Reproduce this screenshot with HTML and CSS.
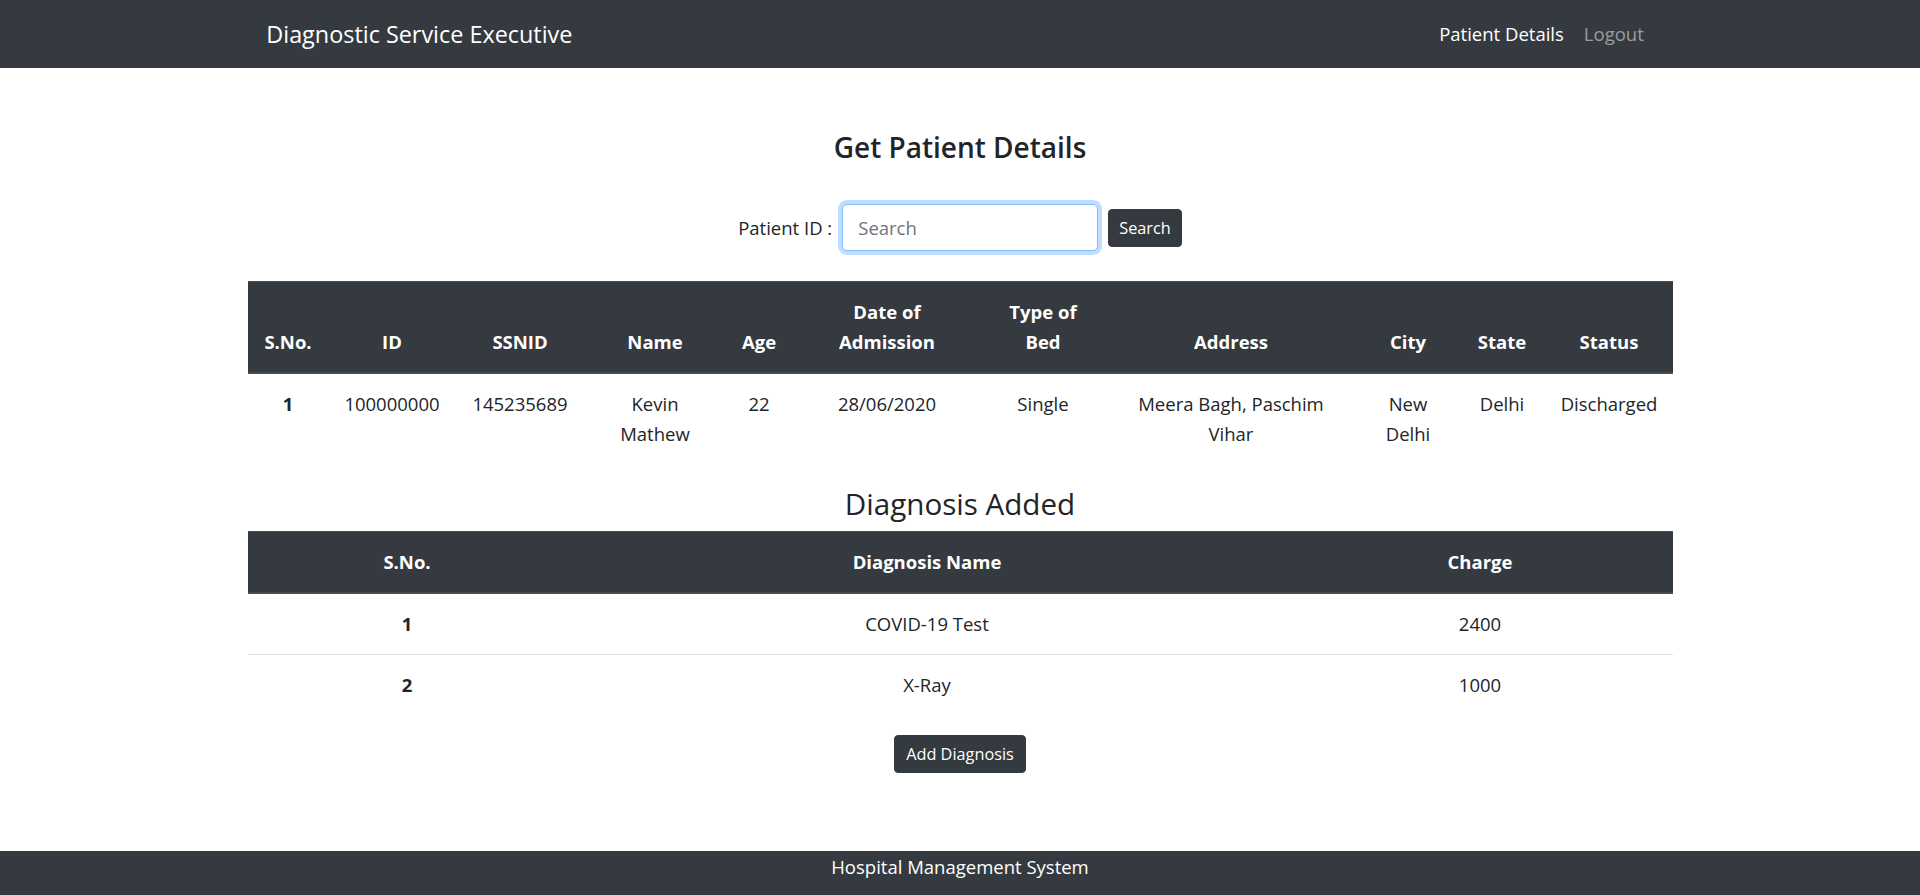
FILE: index.html
```html
<!DOCTYPE html>
<html lang="en">
<head>
<meta charset="utf-8">
<title>Diagnostic Service Executive</title>
<link rel="stylesheet" href="styles.css">
</head>
<body>
<nav class="navbar">
  <div class="nav-inner">
    <a class="brand">Diagnostic Service Executive</a>
    <ul class="nav-links">
      <li><a class="nav-link active">Patient Details</a></li>
      <li><a class="nav-link">Logout</a></li>
    </ul>
  </div>
</nav>
<main class="main">
  <h3 class="title title-strong">Get Patient Details</h3>
  <form class="search-form">
    <label class="search-label">Patient ID :</label>
    <input class="search-input" type="text" placeholder="Search">
    <button class="btn" type="button">Search</button>
  </form>
  <table class="table patient-table">
    <colgroup>
      <col class="c-sno"><col class="c-id"><col class="c-ssnid"><col class="c-name"><col class="c-age"><col class="c-doa"><col class="c-bed"><col class="c-addr"><col class="c-city"><col class="c-state"><col class="c-status">
    </colgroup>
    <thead>
      <tr>
        <th>S.No.</th><th>ID</th><th>SSNID</th><th>Name</th><th>Age</th><th>Date of Admission</th><th>Type of Bed</th><th>Address</th><th>City</th><th>State</th><th>Status</th>
      </tr>
    </thead>
    <tbody>
      <tr>
        <th class="row-head">1</th><td>100000000</td><td>145235689</td><td>Kevin Mathew</td><td>22</td><td>28/06/2020</td><td>Single</td><td>Meera Bagh, Paschim Vihar</td><td>New Delhi</td><td>Delhi</td><td>Discharged</td>
      </tr>
    </tbody>
  </table>
  <h4 class="title title-light">Diagnosis Added</h4>
  <table class="table diag-table">
    <colgroup>
      <col class="d-sno"><col class="d-name"><col class="d-charge">
    </colgroup>
    <thead>
      <tr><th>S.No.</th><th>Diagnosis Name</th><th>Charge</th></tr>
    </thead>
    <tbody>
      <tr><th class="row-head">1</th><td>COVID-19 Test</td><td>2400</td></tr>
      <tr><th class="row-head">2</th><td>X-Ray</td><td>1000</td></tr>
    </tbody>
  </table>
  <div class="actions">
    <button class="btn" type="button">Add Diagnosis</button>
  </div>
</main>
<footer class="footer">Hospital Management System</footer>
</body>
</html>
```
FILE: styles.css
```css
html, body {
  margin: 0;
  padding: 0;
}
body {
  font-family: "Open Sans", "Noto Sans", sans-serif;
  font-size: 18.5px;
  line-height: 30px;
  color: #212529;
  background: #fff;
  min-height: 100vh;
  display: flex;
  flex-direction: column;
}
.navbar {
  background: #343a40;
  height: 68px;
  display: flex;
  align-items: center;
}
.nav-inner {
  width: 1425px;
  margin: 0 auto;
  padding: 0 18.75px;
  box-sizing: border-box;
  display: flex;
  justify-content: space-between;
  align-items: center;
}
.brand {
  color: #fff;
  font-size: 23.4px;
  line-height: 34px;
}
.nav-links {
  list-style: none;
  margin: 0;
  padding: 0;
  display: flex;
}
.nav-link {
  display: block;
  padding: 0 10px;
  color: rgba(255, 255, 255, 0.5);
}
.nav-link.active {
  color: #fff;
}
.main {
  width: 1425px;
  margin: 0 auto;
  padding-top: 58px;
  display: flex;
  flex-direction: column;
  align-items: center;
}
.title {
  margin: 0;
  font-size: 28px;
  line-height: 42px;
  text-align: center;
}
.title-strong {
  font-weight: 600;
  margin-bottom: 36px;
}
.title-light {
  font-size: 29.6px;
  font-weight: 500;
  margin-top: -1px;
  margin-bottom: 6px;
}
.search-form {
  display: flex;
  align-items: center;
  justify-content: center;
  margin: 0 0 30px;
}
.search-label {
  margin-right: 10px;
}
.search-input {
  width: 256px;
  height: 47px;
  box-sizing: border-box;
  padding: 0 15px;
  border: 1px solid #80bdff;
  border-radius: 5px;
  box-shadow: 0 0 0 4px rgba(0, 123, 255, 0.25);
  font-family: inherit;
  font-size: 18.5px;
  color: #495057;
  outline: none;
}
.search-input::placeholder {
  color: #6c757d;
}
.btn {
  margin-left: 10px;
  height: 38px;
  padding: 0 10px;
  background: #343a40;
  border: 1px solid #343a40;
  border-radius: 4px;
  color: #fff;
  font-family: inherit;
  font-size: 16.3px;
  line-height: 36px;
  cursor: pointer;
}
.table {
  width: 1425px;
  border-collapse: collapse;
  table-layout: fixed;
  margin-bottom: 20px;
}
.table th,
.table td {
  padding: 15px;
  text-align: center;
  vertical-align: top;
  border-top: 1px solid #dee2e6;
}
.table thead th {
  background: #343a40;
  color: #fff;
  font-weight: 700;
  vertical-align: bottom;
  border-top: 1px solid #454d55;
  border-bottom: 2px solid #454d55;
}
.table .row-head {
  font-weight: 700;
}
.c-sno { width: 81px; }
.c-id { width: 127px; }
.c-ssnid { width: 129px; }
.c-name { width: 141px; }
.c-age { width: 67px; }
.c-doa { width: 189px; }
.c-bed { width: 123px; }
.c-addr { width: 253px; }
.c-city { width: 101px; }
.c-state { width: 87px; }
.c-status { width: 127px; }
.d-sno { width: 319px; }
.d-name { width: 721px; }
.d-charge { width: 385px; }
.actions {
  display: flex;
  justify-content: center;
}
.actions .btn {
  margin-left: 0;
  padding: 0 11px;
}
.footer {
  margin-top: auto;
  background: #343a40;
  color: #fff;
  text-align: center;
  height: 44px;
  box-sizing: border-box;
  padding-top: 1px;
  line-height: 30px;
}
```
